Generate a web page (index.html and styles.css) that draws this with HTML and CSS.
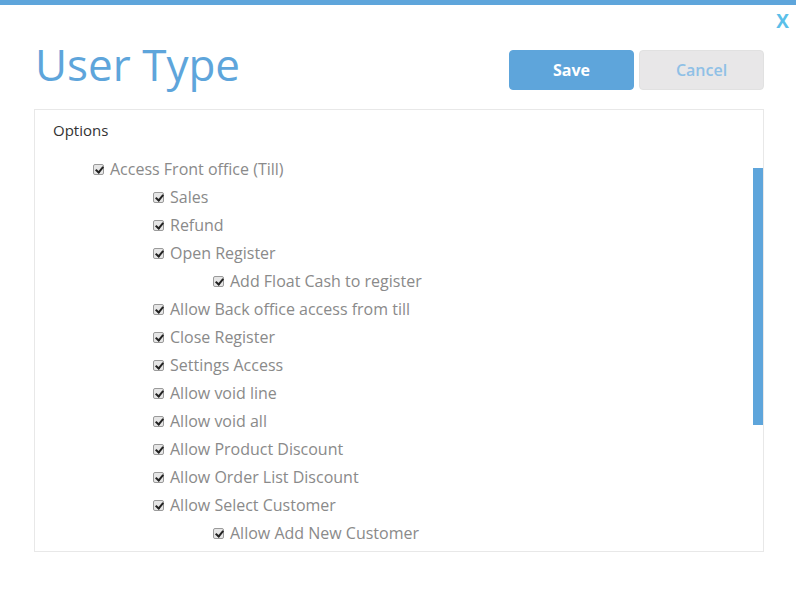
FILE: index.html
```html
<!DOCTYPE html>
<html>
<head>
<meta charset="utf-8">
<link rel="stylesheet" href="styles.css">
</head>
<body>
<div class="modal">
  <div class="topbar"></div>
  <span class="close">X</span>
  <div class="header">
    <h1 class="title">User Type</h1>
    <div class="actions">
      <button class="btn btn-save">Save</button>
      <button class="btn btn-cancel">Cancel</button>
    </div>
  </div>
  <div class="panel">
    <div class="panel-title">Options</div>
    <ul class="tree">
      <li class="row l0"><span class="cb"></span>Access Front office (Till)</li>
      <li class="row l1"><span class="cb"></span>Sales</li>
      <li class="row l1"><span class="cb"></span>Refund</li>
      <li class="row l1"><span class="cb"></span>Open Register</li>
      <li class="row l2"><span class="cb"></span>Add Float Cash to register</li>
      <li class="row l1"><span class="cb"></span>Allow Back office access from till</li>
      <li class="row l1"><span class="cb"></span>Close Register</li>
      <li class="row l1"><span class="cb"></span>Settings Access</li>
      <li class="row l1"><span class="cb"></span>Allow void line</li>
      <li class="row l1"><span class="cb"></span>Allow void all</li>
      <li class="row l1"><span class="cb"></span>Allow Product Discount</li>
      <li class="row l1"><span class="cb"></span>Allow Order List Discount</li>
      <li class="row l1"><span class="cb"></span>Allow Select Customer</li>
      <li class="row l2"><span class="cb"></span>Allow Add New Customer</li>
    </ul>
    <div class="scroll-thumb"></div>
  </div>
</div>
</body>
</html>
```
FILE: styles.css
```css
html, body {
  margin: 0;
  padding: 0;
  background: #fff;
  font-family: "Open Sans", "Liberation Sans", sans-serif;
}
.modal {
  width: 796px;
  height: 597px;
  position: relative;
  overflow: hidden;
}
.topbar {
  height: 5px;
  background: #5ea5db;
}
.close {
  position: absolute;
  top: 9px;
  right: 7px;
  color: #5bbfe9;
  font-weight: 700;
  font-size: 19px;
  line-height: 24px;
}
.header {
  display: flex;
  justify-content: space-between;
  align-items: flex-start;
  padding: 0 32px 0 35px;
  height: 104px;
}
.title {
  margin: 0;
  padding-top: 31px;
  font-weight: 400;
  font-size: 44px;
  line-height: 56px;
  color: #5ea5db;
}
.actions {
  display: flex;
  gap: 5px;
  padding-top: 45px;
}
.btn {
  width: 125px;
  height: 40px;
  padding: 0 0 1px 0;
  border-radius: 4px;
  font-family: "Open Sans", "Liberation Sans", sans-serif;
  font-size: 16px;
  font-weight: 700;
  border: 1px solid transparent;
  cursor: pointer;
}
.btn-save {
  background: #5ea5db;
  color: #fff;
  border-color: #5ea5db;
}
.btn-cancel {
  background: #e8e7e8;
  border-color: #e1e1e1;
  color: #8fc0e6;
  font-weight: 600;
}
.panel {
  position: relative;
  margin-left: 34px;
  width: 728px;
  height: 441px;
  border: 1px solid #e8e8e8;
  overflow: hidden;
}
.panel-title {
  padding: 10px 0 0 18px;
  font-size: 15px;
  line-height: 20px;
  color: #333;
}
.tree {
  list-style: none;
  margin: 0;
  padding: 15px 0 0 0;
}
.row {
  display: flex;
  align-items: center;
  height: 28px;
  font-size: 16px;
  color: #8a8a8a;
}
.l0 { padding-left: 58px; }
.l1 { padding-left: 118px; }
.l2 { padding-left: 178px; }
.cb {
  width: 11px;
  height: 11px;
  box-sizing: border-box;
  border: 1px solid #9a9a9a;
  border-radius: 2px;
  background: #e6e6e6;
  margin-right: 6px;
  position: relative;
  flex: none;
}
.cb::after {
  content: "";
  position: absolute;
  left: 3px;
  top: 0px;
  width: 3px;
  height: 6px;
  border: solid #222;
  border-width: 0 2px 2px 0;
  transform: rotate(40deg);
}
.scroll-thumb {
  position: absolute;
  right: 0;
  top: 58px;
  width: 10px;
  height: 257px;
  background: #5ea5db;
}
```
